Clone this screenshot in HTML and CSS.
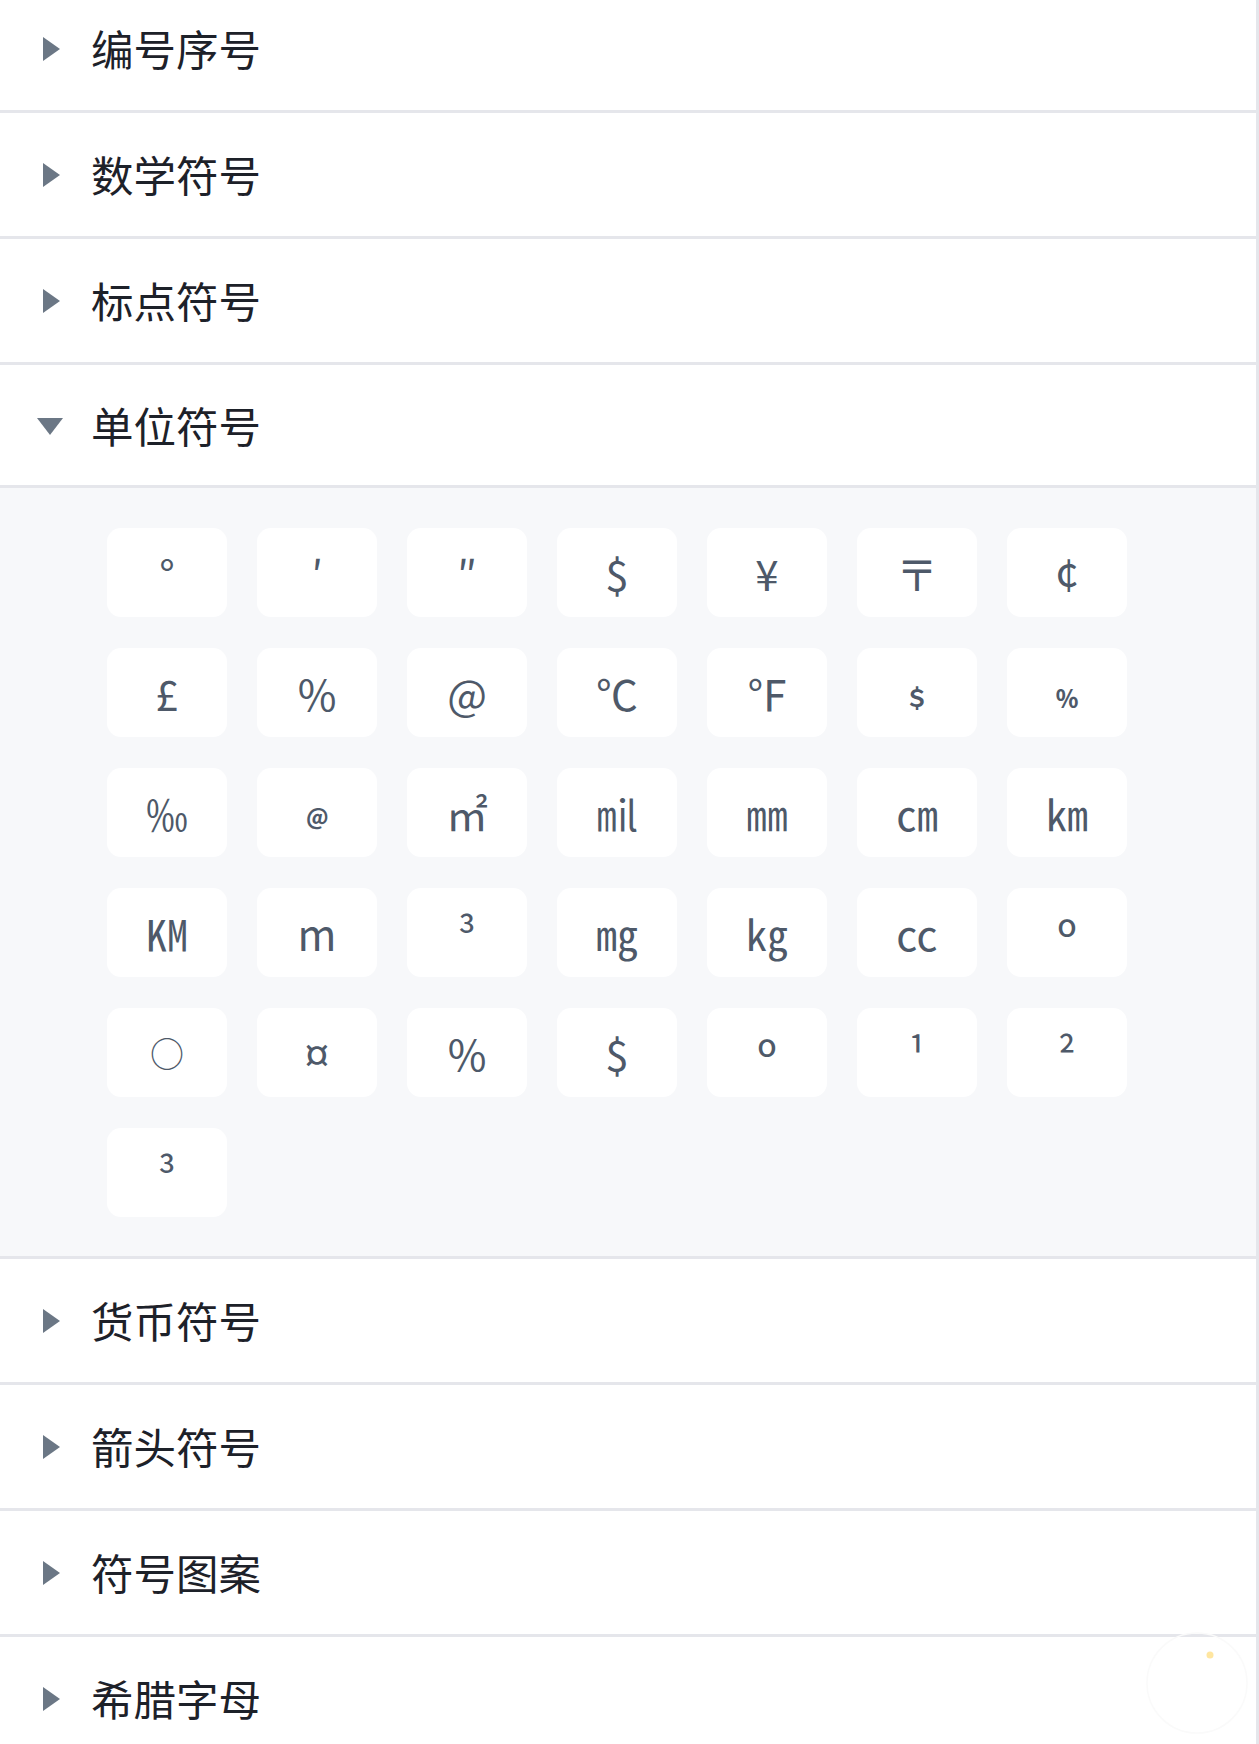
FILE: index.html
```html
<!DOCTYPE html>
<html lang="zh-CN">
<head>
<meta charset="utf-8">
<title>特殊符号</title>
<link rel="stylesheet" href="styles.css">
</head>
<body>
<div class="collapse">
  <div class="item">
    <div class="header"><span class="arrow"></span><span class="title">编号序号</span></div>
  </div>
  <div class="item">
    <div class="header"><span class="arrow"></span><span class="title">数学符号</span></div>
  </div>
  <div class="item">
    <div class="header"><span class="arrow"></span><span class="title">标点符号</span></div>
  </div>
  <div class="item item-open">
    <div class="header header-open"><span class="arrow arrow-down"></span><span class="title">单位符号</span></div>
    <div class="panel">
      <div class="grid">
        <div class="tile">°</div>
        <div class="tile">′</div>
        <div class="tile">″</div>
        <div class="tile">$</div>
        <div class="tile">¥</div>
        <div class="tile">〒</div>
        <div class="tile">¢</div>
        <div class="tile">£</div>
        <div class="tile">%</div>
        <div class="tile">@</div>
        <div class="tile">℃</div>
        <div class="tile">℉</div>
        <div class="tile tile-small">﹩</div>
        <div class="tile tile-small">﹪</div>
        <div class="tile">‰</div>
        <div class="tile tile-small">﹫</div>
        <div class="tile">㎡</div>
        <div class="tile">㏕</div>
        <div class="tile">㎜</div>
        <div class="tile">㎝</div>
        <div class="tile">㎞</div>
        <div class="tile">㏎</div>
        <div class="tile">m</div>
        <div class="tile">³</div>
        <div class="tile">㎎</div>
        <div class="tile">㎏</div>
        <div class="tile">㏄</div>
        <div class="tile tile-ordinal">º</div>
        <div class="tile tile-circle">○</div>
        <div class="tile">¤</div>
        <div class="tile">%</div>
        <div class="tile">$</div>
        <div class="tile tile-ordinal">º</div>
        <div class="tile">¹</div>
        <div class="tile">²</div>
        <div class="tile">³</div>
      </div>
    </div>
  </div>
  <div class="item">
    <div class="header"><span class="arrow"></span><span class="title">货币符号</span></div>
  </div>
  <div class="item">
    <div class="header"><span class="arrow"></span><span class="title">箭头符号</span></div>
  </div>
  <div class="item">
    <div class="header"><span class="arrow"></span><span class="title">符号图案</span></div>
  </div>
  <div class="item">
    <div class="header"><span class="arrow"></span><span class="title">希腊字母</span></div>
  </div>
</div>
<svg class="watermark" width="110" height="110" viewBox="0 0 110 110" aria-hidden="true">
  <circle cx="55" cy="55" r="50" fill="none" stroke="#fafafa" stroke-width="1.5"/>
  <circle cx="68" cy="27" r="3.5" fill="#ffe6a0"/>
</svg>
</body>
</html>
```

FILE: styles.css
```css
html, body {
  margin: 0;
  padding: 0;
  overflow: hidden;
  background: #ffffff;
}

body {
  font-family: "Noto Sans CJK SC", "Noto Sans", sans-serif;
  position: relative;
}

.collapse {
  margin-top: -13px;
  border-right: 3px solid #e5e6eb;
  background: #ffffff;
}

.item {
  border-bottom: 3px solid #e5e6eb;
}

.header {
  height: 123px;
  display: flex;
  align-items: center;
  padding-left: 37px;
  gap: 28px;
}

.header-open {
  height: 120px;
  border-bottom: 3px solid #e5e6eb;
}

.arrow {
  width: 26px;
  height: 24px;
  display: flex;
  align-items: center;
  justify-content: center;
  flex: none;
}

.arrow::before {
  content: "";
  display: block;
  width: 0;
  height: 0;
  border-left: 17px solid #6b7785;
  border-top: 12px solid transparent;
  border-bottom: 12px solid transparent;
  margin-left: 3px;
}

.arrow-down::before {
  border-left: 13px solid transparent;
  border-right: 13px solid transparent;
  border-top: 17px solid #6b7785;
  border-bottom: 0;
  margin-left: 0;
  margin-top: 3px;
}

.title {
  font-size: 42.5px;
  color: #1d2129;
  line-height: 1;
}

.panel {
  background: #f7f8fa;
  padding: 40px 0 39px 107px;
}

.grid {
  display: grid;
  grid-template-columns: repeat(7, 120px);
  grid-auto-rows: 89px;
  column-gap: 30px;
  row-gap: 31px;
}

.tile {
  background: #ffffff;
  border-radius: 14px;
  display: flex;
  align-items: center;
  justify-content: center;
  font-size: 42px;
  color: #4e5969;
}

.tile-small {
  font-size: 30px;
  font-weight: 700;
}

.tile-circle {
  font-size: 34px;
}

.tile-ordinal {
  font-size: 48px;
  padding-top: 8px;
}

.watermark {
  position: absolute;
  left: 1142px;
  top: 1628px;
}
```
